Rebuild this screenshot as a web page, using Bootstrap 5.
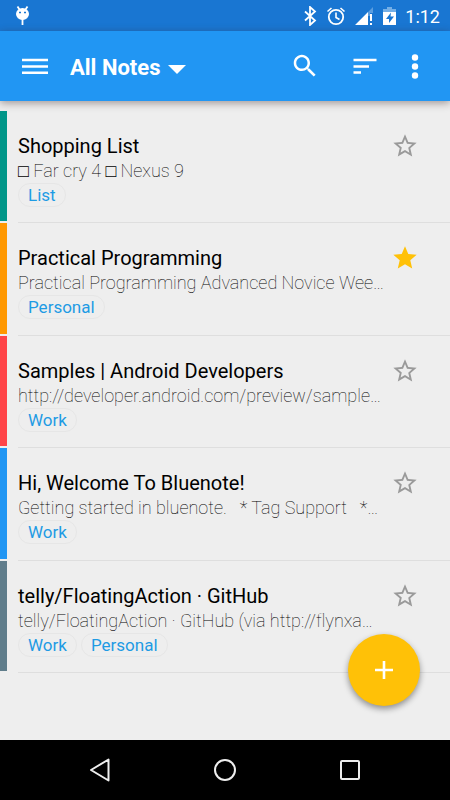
<!DOCTYPE html>
<html lang="en">
<head>
<meta charset="utf-8">
<meta name="viewport" content="width=device-width, initial-scale=1">
<title>All Notes</title>
<link href="https://cdn.jsdelivr.net/npm/bootstrap@5.3.0/dist/css/bootstrap.min.css" rel="stylesheet">
<style>
  body { font-family: Roboto, "Noto Sans", sans-serif; background: #eee; color: #000; }
  svg { display: block; flex: none; }
  button { border: 0; background: none; padding: 0; color: inherit; }
  .status-bar { height: 31px; background: #1976d2; padding: 0 10px 0 15px; }
  .status-icons { gap: 8px; }
  .clock { font-size: 18px; line-height: 24px; font-weight: 400; padding-top: 2px; }
  .app-bar { height: 70px; background: #2196f3; padding: 0 20px; box-shadow: 0 2px 8px rgba(60, 40, 40, .45); z-index: 2; }
  .folder { font-size: 22px; line-height: 28px; font-weight: 700; gap: 8px; padding-top: 3px; }
  .app-actions { gap: 20px; }
  .search { margin-right: 10px; }
  .notes { padding: 10px 0 67px; }
  .note { gap: 11px; }
  .strip { width: 7px; margin-bottom: 2px; }
  .note-body { border-bottom: 1px solid #dedede; padding: 23px 0 0; }
  .note h2 { font-size: 20px; line-height: 24px; font-weight: 400; margin: 0; }
  .snippet { font-size: 18px; line-height: 25px; font-weight: 150; margin: 0; white-space: pre; }
  .tag { font-size: 17px; line-height: 22px; color: #1e9be4; border: 1px solid #e6e6e6; border-radius: 12px; padding: 0 9px; text-decoration: none; }
  .star { margin: -2px 31px 0 0; color: #9a9a9a; }
  .star-on { color: #ffc107; }
  .teal { background: #009688; }
  .orange { background: #ff9800; }
  .red { background: #ff4448; }
  .blue { background: #2196f3; }
  .slate { background: #607d8b; }
  .fab { right: 30px; bottom: 34px; width: 72px; height: 72px; background: #ffc107; box-shadow: 0 3px 6px rgba(0, 0, 0, .4); }
  .nav-bar { height: 60px; background: #000; padding: 0 88px; }
</style>
<script src="https://cdn.jsdelivr.net/npm/bootstrap@5.3.0/dist/js/bootstrap.bundle.min.js"></script>
</head>
<body class="d-flex flex-column min-vh-100">
<svg class="d-none" aria-hidden="true">
  <symbol id="star-line" viewBox="0 0 24 24"><path fill="currentColor" d="M22 9.24l-7.19-.62L12 2 9.19 8.63 2 9.24l5.46 4.73L5.82 21 12 17.27 18.18 21l-1.63-7.03L22 9.24zM12 15.4l-3.76 2.27 1-4.28-3.32-2.88 4.38-.38L12 6.1l1.71 4.04 4.38.38-3.32 2.88 1 4.28L12 15.4z"/></symbol>
  <symbol id="star-full" viewBox="0 0 24 24"><path fill="currentColor" d="M12 17.27L18.18 21l-1.64-7.03L22 9.24l-7.19-.61L12 2 9.19 8.63 2 9.24l5.46 4.73L5.82 21z"/></symbol>
</svg>

<div class="status-bar d-flex align-items-center justify-content-between text-white">
  <svg width="15" height="21" viewBox="0 0 15 21" aria-hidden="true"><path d="M2.500 1.500l2 3M12.500 1.500l-2 3M7.500 14v6" stroke="#fff" stroke-width="1.800" fill="none"/><ellipse cx="7.500" cy="9" rx="6.500" ry="6" fill="#fff"/><path d="M4 7.500h2M9 7.500h2" stroke="#1976d2" stroke-width="1.500"/></svg>
  <div class="status-icons d-flex align-items-center">
    <svg width="16" height="20" viewBox="0 0 16 20" aria-label="Bluetooth"><path d="M3 5.500l10 9-5 4.500V1l5 4.500-10 9" fill="none" stroke="#fff" stroke-width="1.800"/></svg>
    <svg width="20" height="20" viewBox="0 0 20 20" aria-label="Alarm"><circle cx="10" cy="11" r="7.200" fill="none" stroke="#fff" stroke-width="1.800"/><path d="M10 6.500v5l3.500 2M1.500 5.500L5.500 2M18.500 5.500l-4-3.500" fill="none" stroke="#fff" stroke-width="1.600"/></svg>
    <svg width="20" height="20" viewBox="0 0 20 20" aria-label="Signal"><path d="M14 6l5-5v6h-3v3h-2z" fill="#5b9ee0"/><path d="M1 19L14 6v13zM16 8h2v7h-2zM16 17h2v2h-2z" fill="#fff"/></svg>
    <svg width="15" height="20" viewBox="0 0 15 20" aria-label="Battery charging"><path d="M5 1h5v2h4v4H1V3h4z" fill="#75afe6"/><path d="M1 6h13v13H1z" fill="#fff"/><path d="M9 6.500L4 13h3v4l5-6.500H8.500z" fill="#1976d2"/></svg>
    <span class="clock">1:12</span>
  </div>
</div>

<header class="app-bar d-flex align-items-center text-white position-relative">
  <button type="button" aria-label="Menu"><svg width="30" height="30" viewBox="0 0 30 30"><path d="M2 9h26M2 15.400h26M2 21.800h26" stroke="#fff" stroke-width="2.500"/></svg></button>
  <button type="button" class="folder d-flex align-items-center ms-3 ps-1 me-auto"><span>All Notes</span><svg class="mt-1" width="18" height="10" viewBox="0 0 18 10" aria-hidden="true"><path d="M0 0h18L9 9z" fill="#fff"/></svg></button>
  <div class="app-actions d-flex">
    <button type="button" class="search" aria-label="Search"><svg width="30" height="30" viewBox="0 0 24 24"><path fill="#fff" d="M15.500 14h-.79l-.28-.27C15.410 12.590 16 11.110 16 9.500 16 5.910 13.090 3 9.500 3S3 5.910 3 9.500 5.910 16 9.500 16c1.610 0 3.090-.59 4.230-1.570l.27.280v.79l5 4.990L20.490 19l-4.990-5zm-6 0C7.010 14 5 11.990 5 9.500S7.010 5 9.500 5 14 7.010 14 9.500 11.990 14 9.500 14z"/></svg></button>
    <button type="button" aria-label="Sort"><svg width="30" height="30" viewBox="0 0 30 30"><path d="M3.500 9h23M3.500 15.400h15.500M3.500 21.500h7.500" stroke="#fff" stroke-width="2.500"/></svg></button>
    <button type="button" aria-label="More options"><svg width="30" height="30" viewBox="0 0 30 30"><g fill="#fff"><circle cx="15" cy="6.500" r="3.200"/><circle cx="15" cy="15.500" r="3.200"/><circle cx="15" cy="24.500" r="3.200"/></g></svg></button>
  </div>
</header>

<main class="flex-fill d-flex flex-column position-relative">
  <div class="notes flex-fill d-flex flex-column">
    <article class="note d-flex flex-fill">
      <div class="strip teal"></div>
      <div class="note-body d-flex flex-fill">
        <div class="flex-fill"><h2>Shopping List</h2><p class="snippet">□ Far cry 4 □ Nexus 9</p><div class="d-flex gap-1"><a href="#" class="tag">List</a></div></div>
        <button type="button" class="star align-self-start" aria-label="Add star"><svg width="28" height="28"><use href="#star-line"/></svg></button>
      </div>
    </article>
    <article class="note d-flex flex-fill">
      <div class="strip orange"></div>
      <div class="note-body d-flex flex-fill">
        <div class="flex-fill"><h2>Practical Programming</h2><p class="snippet">Practical Programming Advanced Novice Wee…</p><div class="d-flex gap-1"><a href="#" class="tag">Personal</a></div></div>
        <button type="button" class="star star-on align-self-start" aria-label="Remove star"><svg width="28" height="28"><use href="#star-full"/></svg></button>
      </div>
    </article>
    <article class="note d-flex flex-fill">
      <div class="strip red"></div>
      <div class="note-body d-flex flex-fill">
        <div class="flex-fill"><h2>Samples | Android Developers</h2><p class="snippet">http://developer.android.com/preview/sample…</p><div class="d-flex gap-1"><a href="#" class="tag">Work</a></div></div>
        <button type="button" class="star align-self-start" aria-label="Add star"><svg width="28" height="28"><use href="#star-line"/></svg></button>
      </div>
    </article>
    <article class="note d-flex flex-fill">
      <div class="strip blue"></div>
      <div class="note-body d-flex flex-fill">
        <div class="flex-fill"><h2>Hi, Welcome To Bluenote!</h2><p class="snippet">Getting started in bluenote.   * Tag Support   *…</p><div class="d-flex gap-1"><a href="#" class="tag">Work</a></div></div>
        <button type="button" class="star align-self-start" aria-label="Add star"><svg width="28" height="28"><use href="#star-line"/></svg></button>
      </div>
    </article>
    <article class="note d-flex flex-fill">
      <div class="strip slate"></div>
      <div class="note-body d-flex flex-fill">
        <div class="flex-fill"><h2>telly/FloatingAction · GitHub</h2><p class="snippet">telly/FloatingAction · GitHub (via http://flynxa…</p><div class="d-flex gap-1"><a href="#" class="tag">Work</a><a href="#" class="tag">Personal</a></div></div>
        <button type="button" class="star align-self-start" aria-label="Add star"><svg width="28" height="28"><use href="#star-line"/></svg></button>
      </div>
    </article>
  </div>
  <button type="button" class="fab position-absolute rounded-circle d-flex align-items-center justify-content-center" aria-label="New note"><svg width="18" height="18" viewBox="0 0 18 18"><path d="M9 0v18M0 9h18" stroke="#fff" stroke-width="2.600"/></svg></button>
</main>

<nav class="nav-bar d-flex align-items-center justify-content-between" aria-label="System">
  <button type="button" aria-label="Back"><svg width="24" height="26" viewBox="0 0 24 26"><path d="M20.500 2.500v21L3 13z" fill="none" stroke="#eee" stroke-width="2" stroke-linejoin="round"/></svg></button>
  <button type="button" aria-label="Home"><svg width="24" height="24" viewBox="0 0 24 24"><circle cx="12" cy="12" r="10" fill="none" stroke="#eee" stroke-width="2"/></svg></button>
  <button type="button" aria-label="Recent apps"><svg width="24" height="24" viewBox="0 0 24 24"><rect x="3" y="3" width="18" height="18" rx="1" fill="none" stroke="#eee" stroke-width="2"/></svg></button>
</nav>
</body>
</html>
